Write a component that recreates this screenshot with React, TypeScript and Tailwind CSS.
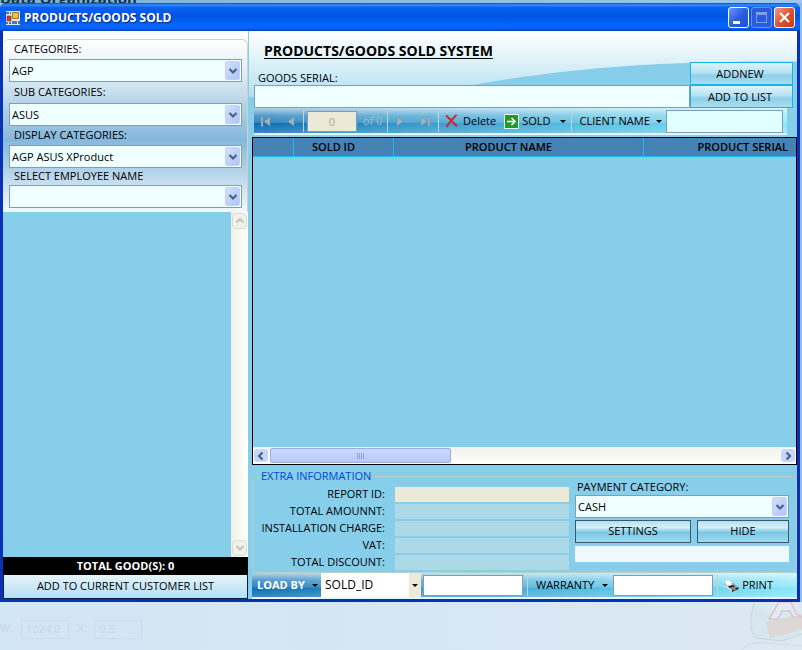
import { useId, type ReactNode } from "react";

const FIELD_BORDER = "border border-[#7f9db9]";

function Chevron({ dir = "down", color = "#4d6185" }: { dir?: "down" | "up" | "left" | "right"; color?: string }) {
  const d = {
    down: "M1.5 3 5 6.500l3.500-3.500",
    up: "M1.500 6.500 5 3l3.500 3.500",
    left: "M6.500 1.500 3 5l3.500 3.500",
    right: "M3.500 1.500 7 5 3.500 8.500",
  }[dir];
  return (
    <svg width="10" height="10" viewBox="0 0 10 10" fill="none" stroke={color} strokeWidth="2.2" aria-hidden="true">
      <path d={d} />
    </svg>
  );
}

function Caret() {
  return (
    <svg width="6" height="3" viewBox="0 0 6 3" aria-hidden="true">
      <path d="M0 0h6L3 3z" fill="#000" />
    </svg>
  );
}

function Combo({ id, value }: { id: string; value: string }) {
  return (
    <div className="relative h-[23px] w-full">
      <select
        id={id}
        className={`h-full w-full appearance-none rounded-none bg-[#f0ffff] pl-[2px] text-[11px] leading-none text-black ${FIELD_BORDER}`}
      >
        <option>{value}</option>
      </select>
      <span className="pointer-events-none absolute top-[2px] right-[2px] flex h-[19px] w-[15px] items-center justify-center rounded-[2px] border border-[#c3d0f7] bg-gradient-to-br from-[#d3dffd] to-[#aec5f8]">
        <Chevron />
      </span>
    </div>
  );
}

function CategoryField({ label, value, labelClass }: { label: string; value: string; labelClass: string }) {
  const id = useId();
  return (
    <div>
      <label htmlFor={id} className={`flex items-center pl-[5px] ${labelClass}`}>
        {label}
      </label>
      <Combo id={id} value={value} />
    </div>
  );
}

function ReportRow({ label, fill }: { label: string; fill: string }) {
  const id = useId();
  return (
    <div className="flex h-[15px] items-center">
      <label htmlFor={id} className="w-[132px] shrink-0 text-right whitespace-nowrap">
        {label}
      </label>
      <input id={id} readOnly className={`ml-[10px] h-[15px] min-w-0 flex-1 ${fill}`} />
    </div>
  );
}

function GlassButton({ children }: { children: ReactNode }) {
  return (
    <button className="h-[23px] border border-[#18b4e6] bg-[linear-gradient(#dff4fb_0%,#b4e2f3_45%,#8fd0ea_60%,#a9ddf2_100%)] pt-[2px] pr-[3px] text-center">
      {children}
    </button>
  );
}

function NavIcon({ kind, label }: { kind: "first" | "prev" | "next" | "last"; label: string }) {
  const flip = kind === "next" || kind === "last";
  const bar = kind === "first" || kind === "last";
  return (
    <button aria-label={label} disabled className="flex h-full w-6 items-center justify-center">
      <svg width="12" height="11" viewBox="0 0 12 11" aria-hidden="true" fill="#a3b4bd" stroke="#6f93a8" strokeWidth=".5">
        <g transform={flip ? "translate(12 0) scale(-1 1)" : undefined}>
          {bar && <path d="M1 .5h2v10H1z" />}
          <path d="M10 1v9L4 5.500z" />
        </g>
      </svg>
    </button>
  );
}

function Separator() {
  return <span className="mx-px h-[21px] w-px shrink-0 bg-[#c5d3cf]" />;
}

const BAR_FILL =
  "bg-[linear-gradient(#ffffffb0_0%,#ffffff50_30%,#ffffff28_60%,#ffffff00_61%,#ffffff30_100%),linear-gradient(90deg,#0a6cb4_0%,#2b92c8_25%,#4db4dc_55%,#6fd6f0_85%,#87e8fa_100%)]";

function TitleBar() {
  return (
    <header className="flex h-7 shrink-0 items-center rounded-t-md bg-[linear-gradient(#0a48c8_0%,#3a8bff_7%,#0a63f0_16%,#0054e3_45%,#0468ff_82%,#0560f0_92%,#0040b8_100%)] pt-px pr-[5px] pl-[6px]">
      <svg width="14" height="14" viewBox="0 0 14 14" aria-hidden="true">
        <path fill="#dfe6ee" d="M0 0h14v14H0z" />
        <path fill="#5b6f8c" d="M0 1h3v2H0zM4 1h1v2H4zM0 11h2v2H0zM3 11h2v2H3zM12 10h2v3h-2z" />
        <path fill="#c3403a" stroke="#7c2a2a" strokeWidth=".6" d="M1 5h4v5H1z" />
        <path fill="#f3c23b" stroke="#9c7a1c" d="M6.500 1.500h6v6h-6z" />
        <path fill="#4475c9" d="M6 10h5v3H6z" />
      </svg>
      <h1 className="ml-1 text-[12px] leading-none font-bold whitespace-nowrap text-white font-['Open_Sans','Noto_Sans',sans-serif] [text-shadow:1px_1px_1px_#0a2c80]">
        PRODUCTS/GOODS SOLD
      </h1>
      <div className="ml-auto flex gap-[2px]">
        <button aria-label="Minimize" className="flex size-[21px] rounded-[3px] border border-white bg-gradient-to-br from-[#6a93f5] via-[#2c5fe0] to-[#1d4fd0]">
          <span className="mt-[13px] ml-1 h-[3px] w-[7px] bg-white" />
        </button>
        <button aria-label="Maximize" disabled className="flex size-[21px] items-center justify-center rounded-[3px] border border-[#6c8fe8] bg-[#2a5bdc]">
          <span className="size-[11px] border border-t-[3px] border-[#7f9cec]" />
        </button>
        <button aria-label="Close" className="flex size-[21px] items-center justify-center rounded-[3px] border border-white bg-gradient-to-br from-[#f09a80] via-[#e0532c] to-[#c8381a]">
          <svg width="11" height="11" viewBox="0 0 11 11" stroke="#fff" strokeWidth="2.2" aria-hidden="true">
            <path d="M1 1l9 9M10 1l-9 9" />
          </svg>
        </button>
      </div>
    </header>
  );
}

function Sidebar() {
  return (
    <aside className="flex w-[245px] shrink-0 flex-col bg-[#fafdfe] pt-2">
      <div className="rounded-t-md border-t border-r border-[#cfd3c4] bg-[linear-gradient(#ffffff_0%,#dfecf5_20%,#86b7dc_58%,#a8cce6_72%,#f4f9fd_100%)] pr-[5px] pb-1 pl-[6px]">
        <CategoryField label="CATEGORIES:" value="AGP" labelClass="h-[19px]" />
        <CategoryField label="SUB CATEGORIES:" value="ASUS" labelClass="h-[21px]" />
        <CategoryField label="DISPLAY CATEGORIES:" value="AGP ASUS XProduct" labelClass="h-[19px]" />
        <CategoryField label="SELECT EMPLOYEE NAME" value="" labelClass="h-[17px]" />
      </div>
      <div className="flex min-h-0 flex-1 bg-[#87ceeb]">
        <div className="flex-1" />
        <div className="flex w-[17px] flex-col justify-between bg-gradient-to-r from-[#f1f1ea] to-[#fefefb]">
          <button aria-label="Scroll up" disabled className="m-px flex h-4 items-center justify-center rounded-sm border border-[#dcdcd0] bg-[#f3f2ea]">
            <Chevron dir="up" color="#c5c4b8" />
          </button>
          <button aria-label="Scroll down" disabled className="m-px flex h-4 items-center justify-center rounded-sm border border-[#dcdcd0] bg-[#f3f2ea]">
            <Chevron color="#c5c4b8" />
          </button>
        </div>
      </div>
      <p className="h-[18px] bg-black text-center leading-[18px] font-bold text-white">TOTAL GOOD(S): 0</p>
      <button className="h-6 border border-t-0 border-[#10203c] bg-gradient-to-b from-[#e4f4fb] to-[#b4dff3] text-center">
        ADD TO CURRENT CUSTOMER LIST
      </button>
    </aside>
  );
}

function SoldToolbar() {
  return (
    <div className={`mr-[10px] ml-[5px] flex h-[27px] items-center border-b-2 border-[#e4f6fc] pt-px ${BAR_FILL}`}>
      <NavIcon kind="first" label="Move first" />
      <NavIcon kind="prev" label="Move previous" />
      <Separator />
      <input aria-label="Position" defaultValue="0" disabled className={`mx-[2px] h-[21px] w-[50px] shrink-0 bg-[#ece9d8] text-center text-[#aca899] ${FIELD_BORDER}`} />
      <span className="w-[27px] shrink-0 text-center whitespace-nowrap text-[#a3b8c2]">of 0</span>
      <Separator />
      <NavIcon kind="next" label="Move next" />
      <NavIcon kind="last" label="Move last" />
      <Separator />
      <button className="ml-[5px] flex items-center gap-[5px]">
        <svg width="13" height="14" viewBox="0 0 13 14" fill="none" stroke="#d8232a" strokeWidth="2" aria-hidden="true">
          <path d="M1 1.500C4 4 8 8.500 12 12.500M11.500 1C8 4 4 8.500 1.500 13" />
        </svg>
        Delete
      </button>
      <button className="ml-2 flex items-center gap-[3px]">
        <svg width="15" height="15" viewBox="0 0 15 15" aria-hidden="true">
          <path fill="#23992b" stroke="#e8f6e4" d="M.5.5h14v14H.5z" />
          <path d="M3 7.500h8M7.500 4l3.500 3.500L7.500 11" fill="none" stroke="#fff" strokeWidth="1.600" />
        </svg>
        SOLD
        <span className="ml-[6px]"><Caret /></span>
      </button>
      <span className="w-[4px]" />
      <Separator />
      <button className="ml-[7px] flex shrink-0 items-center gap-[6px] whitespace-nowrap">
        CLIENT NAME <Caret />
      </button>
      <input aria-label="Client name" className={`mr-1 ml-[4px] h-[23px] min-w-0 flex-1 bg-[#e0ffff] ${FIELD_BORDER}`} />
    </div>
  );
}

function EntryHeader() {
  return (
    <div className="relative">
      <svg className="absolute inset-0 h-full w-full" viewBox="0 0 549 106" preserveAspectRatio="none" aria-hidden="true">
        <defs>
          <linearGradient id="sheen" x1="0" y1="0" x2="0" y2="1">
            <stop offset="0" stopColor="#ffffff" />
            <stop offset="0.400" stopColor="#e2f3f9" />
            <stop offset="1" stopColor="#b4dff1" />
          </linearGradient>
        </defs>
        <path fill="url(#sheen)" d="M0 0H549V31C460 31 400 33 340 39 290 44 265 48 230 54 160 65 90 67 0 67z" />
      </svg>
      <div className="relative flex pt-[31px] pr-1 pl-[5px]">
        <div className="-mt-[31px] flex min-w-0 flex-1 flex-col">
          <h2 className="h-[39px] pl-[10px] text-[14px] leading-[40px] font-bold whitespace-nowrap underline underline-offset-2">
            PRODUCTS/GOODS SOLD SYSTEM
          </h2>
          <label htmlFor="serial" className="h-[15px] pl-1 leading-[15px]">
            GOODS SERIAL:
          </label>
          <input id="serial" className={`h-[23px] bg-[#f0ffff] px-1 ${FIELD_BORDER}`} />
        </div>
        <div className="flex w-[103px] shrink-0 flex-col">
          <GlassButton>ADDNEW</GlassButton>
          <GlassButton>ADD TO LIST</GlassButton>
        </div>
      </div>
      <div className="relative">
        <SoldToolbar />
      </div>
    </div>
  );
}

function ProductGrid() {
  return (
    <div className="mt-[2px] ml-[3px] flex min-h-0 flex-1 flex-col border border-black bg-[#87ceeb]">
      <table className="w-full table-fixed border-separate border-spacing-0">
        <thead>
          <tr className="h-[19px] bg-[#4682b4]">
            <th className="w-[41px] border-r border-b border-[#22b8ee]" />
            <th className="w-[100px] border-r border-b border-[#22b8ee] p-0 pr-5 font-semibold">SOLD ID</th>
            <th className="w-[250px] border-r border-b border-[#22b8ee] p-0 pr-5 font-semibold">PRODUCT NAME</th>
            <th className="border-b border-[#22b8ee] p-0 pr-2 text-right font-semibold whitespace-nowrap">PRODUCT SERIAL</th>
          </tr>
        </thead>
        <tbody />
      </table>
      <div className="mt-auto flex h-[17px] bg-gradient-to-b from-[#f1f1ea] to-[#fefefb]">
        <button aria-label="Scroll left" className="my-px flex w-4 items-center justify-center rounded-sm border border-white bg-[#c6d5fb]">
          <Chevron dir="left" />
        </button>
        <div className="my-px ml-px flex w-[181px] items-center justify-center gap-px rounded-[2px] border border-[#98b0e0] bg-gradient-to-b from-[#cbd8fd] to-[#b8cafa]">
          {[0, 1, 2, 3].map((i) => (
            <span key={i} className="h-[6px] w-px bg-[#8ca4dc]" />
          ))}
        </div>
        <button aria-label="Scroll right" className="my-px ml-auto flex w-4 items-center justify-center rounded-sm border border-white bg-[#c6d5fb]">
          <Chevron dir="right" />
        </button>
      </div>
    </div>
  );
}

function ExtraInformation() {
  return (
    <fieldset className="mt-[5px] ml-[3px] flex min-w-0 gap-[6px] rounded-md border border-[#b9cfc8] pr-[7px] pb-[2px] pl-0">
      <legend className="ml-[6px] px-[2px] leading-[12px] text-[#0046d5]">EXTRA INFORMATION</legend>
      <div className="flex min-w-0 flex-1 flex-col gap-[2px] pt-[5px]">
        <ReportRow label="REPORT ID:" fill="bg-[#ece9d8]" />
        <ReportRow label="TOTAL AMOUNNT:" fill="bg-[#add8e6]" />
        <ReportRow label="INSTALLATION CHARGE:" fill="bg-[#add8e6]" />
        <ReportRow label="VAT:" fill="bg-[#add8e6]" />
        <ReportRow label="TOTAL DISCOUNT:" fill="bg-[#add8e6]" />
      </div>
      <div className="w-[214px] shrink-0">
        <label htmlFor="payment" className="block h-[13px] pl-[2px] leading-[10px]">
          PAYMENT CATEGORY:
        </label>
        <Combo id="payment" value="CASH" />
        <div className="mt-[2px] flex gap-[6px]">
          <button className="h-[23px] w-[116px] border border-[#3d5a6c] bg-[linear-gradient(#b4e0f2_0%,#d6eff8_30%,#7cc8e6_55%,#a0d9ee_100%)]">SETTINGS</button>
          <button className="h-[23px] flex-1 border border-[#3d5a6c] bg-[linear-gradient(#b4e0f2_0%,#d6eff8_30%,#7cc8e6_55%,#a0d9ee_100%)]">HIDE</button>
        </div>
        <input aria-label="Payment note" className="mt-[3px] block h-4 w-full bg-[#f0f8ff]" />
      </div>
    </fieldset>
  );
}

function LoadToolbar() {
  return (
    <div className={`ml-[3px] flex h-[26px] items-center border-b-2 border-[#e4f6fc] ${BAR_FILL}`}>
      <button className="flex w-[69px] shrink-0 items-center gap-[7px] pl-[5px] font-bold whitespace-nowrap text-white">
        LOAD BY <Caret />
      </button>
      <div className="relative h-full w-[100px] shrink-0">
        <select aria-label="Load by" className="h-full w-full appearance-none rounded-none bg-white pl-1 text-[12px] text-black">
          <option>SOLD_ID</option>
        </select>
        <span className="pointer-events-none absolute inset-y-0 right-0 flex w-3 items-center justify-center bg-[#ece9d8]">
          <Caret />
        </span>
      </div>
      <input aria-label="Load value" className={`ml-[2px] h-[21px] w-[100px] bg-white ${FIELD_BORDER}`} />
      <span className="w-[3px]" />
      <Separator />
      <button className="ml-[7px] flex shrink-0 items-center gap-[8px] whitespace-nowrap">
        WARRANTY <Caret />
      </button>
      <input aria-label="Warranty" className={`ml-[5px] h-[21px] w-[100px] bg-white ${FIELD_BORDER}`} />
      <span className="w-[3px]" />
      <Separator />
      <button className="ml-[5px] flex shrink-0 items-center gap-[3px]">
        <svg width="15" height="13" viewBox="0 0 15 13" aria-hidden="true">
          <path fill="#8a8f94" d="M1 5 9 4l5.500 5-6 2.500z" />
          <path fill="#fff" stroke="#c9ced2" strokeWidth=".6" d="M.5 1.500 5.500 1 8.500 5.500 3 7z" />
          <path fill="#dcdad2" d="M1 6.500 3.500 7.500 8 11v1.500L1 8z" />
          <path fill="#25282c" d="M4 7.500 9 6l1.500 1.500L6 9zM8 11l6.500-3v2L8 13z" />
          <path fill="#e0b83a" d="M9.500 10.500l2-.8v1l-2 .8z" />
        </svg>
        PRINT
      </button>
    </div>
  );
}

function Desktop() {
  return (
    <footer className="relative h-12 shrink-0 overflow-hidden bg-gradient-to-r from-[#d3e6f5] via-[#d6e6f3] to-[#dce9f3]">
      <p className="flex gap-2 pt-[18px] pl-0 text-[11px] text-[#c4d8e7]">
        <span>W:</span>
        <span className="w-12 border border-[#cbdeec] px-1">1024.0</span>
        <span>X:</span>
        <span className="w-12 border border-[#cbdeec] px-1">0.5</span>
      </p>
      <svg className="absolute top-0 right-0" width="60" height="48" viewBox="0 0 60 48" fill="none" aria-hidden="true">
        <path d="M12 0C8 14 7 30 14 36l26 3 20-7" stroke="#c3d6de" fill="#d8e7ef" />
        <path d="M0 48c4-6 14-8 24-7l36 3" stroke="#d2d9e0" />
        <path fill="#dcd8d6" d="M24 20l36-8v16l-32 8z" />
        <path d="M27 17 36 2l1-2h12l5 12 6 3h-9l-3-6h-8l-4 8z" stroke="#e0c3c9" strokeWidth="1.500" fill="#e3ecf3" />
      </svg>
    </footer>
  );
}

export default function App() {
  return (
    <div className="flex h-screen min-h-[560px] flex-col bg-[#8fbde8] text-[11px] text-black font-['Open_Sans','Noto_Sans',sans-serif]">
      <div className="flex h-[3px] shrink-0 items-end overflow-hidden bg-gradient-to-r from-[#7fb0dc] to-[#9cc6ee]">
        <span className="text-[15px] leading-[10px] font-bold whitespace-nowrap text-[#14304a]">Data Organization</span>
      </div>
      <div className="mr-[2px] flex min-h-0 flex-1 flex-col rounded-t-md bg-[#0831b5]">
        <TitleBar />
        <main className="mr-[3px] mb-[3px] ml-[3px] flex min-h-0 flex-1">
          <Sidebar />
          <section className="flex min-w-0 flex-1 flex-col bg-[#87ceeb] pl-px">
            <EntryHeader />
            <ProductGrid />
            <ExtraInformation />
            <LoadToolbar />
          </section>
        </main>
      </div>
      <Desktop />
    </div>
  );
}
